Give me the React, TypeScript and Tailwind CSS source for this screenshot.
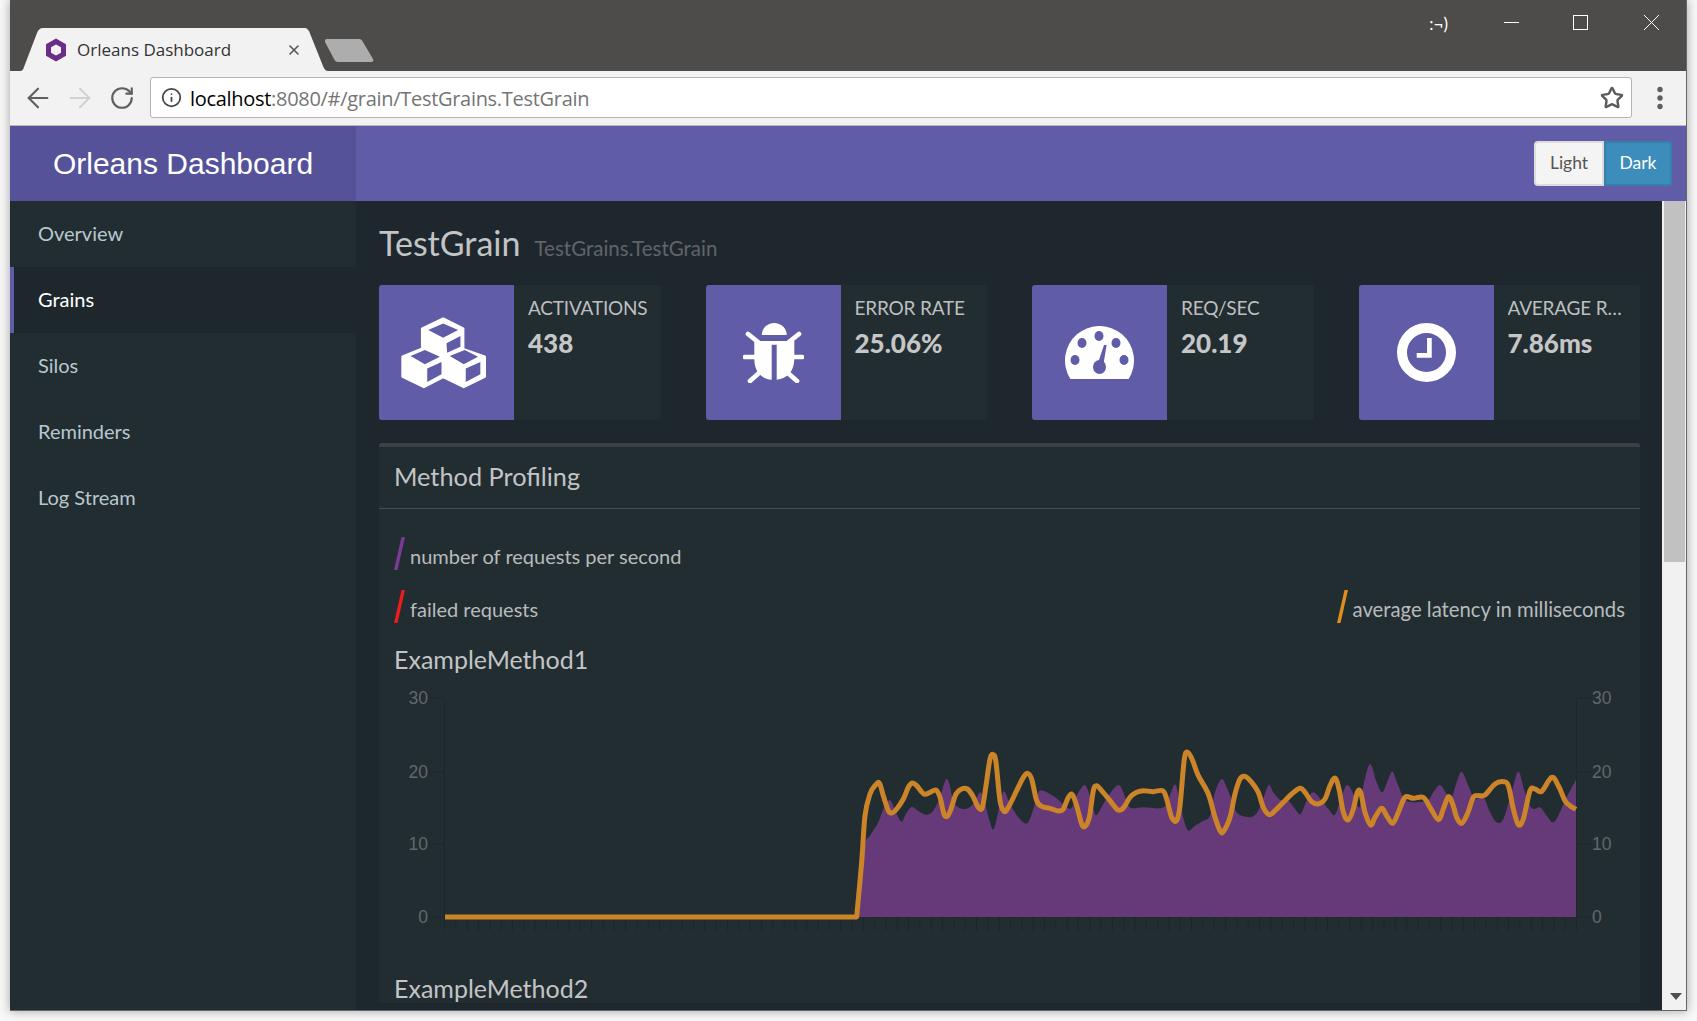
import { ArrowLeft, ArrowRight, Info, RotateCw, Star, X } from "lucide-react";

/* chart points, read off the screenshot: [x, y] in page pixels x3, from x=850 / y=730 */
const linePts: number[][] = [
  [20, 563], [35, 400], [45, 260], [60, 195], [75, 170], [88, 162], [100, 200], [115, 245], [125, 252], [140, 240],
  [160, 210], [175, 175], [187, 162], [200, 170], [222, 195], [240, 190], [258, 183], [270, 205], [282, 255], [292, 262],
  [303, 240], [318, 195], [335, 180], [352, 180], [368, 200], [385, 235], [397, 235], [408, 170], [420, 90], [430, 77],
  [438, 100], [450, 215], [462, 247], [475, 235], [500, 185], [520, 145], [533, 133], [545, 150], [560, 215], [575, 232],
  [600, 238], [625, 246], [640, 240], [655, 205], [667, 197], [680, 230], [695, 285], [705, 292], [718, 265], [730, 185],
  [740, 170], [755, 185], [780, 215], [800, 240], [812, 243], [825, 230], [840, 205], [860, 190], [880, 185], [910, 188],
  [938, 185], [950, 210], [965, 265], [980, 275], [990, 230], [1003, 90], [1014, 70], [1028, 95], [1045, 140], [1075, 195],
  [1095, 265], [1110, 305], [1120, 308], [1140, 265], [1155, 195], [1170, 150], [1185, 142], [1205, 160], [1225, 190], [1240, 235],
  [1258, 257], [1275, 245], [1300, 220], [1325, 195], [1350, 178], [1365, 190], [1385, 218], [1405, 225], [1425, 210], [1440, 170],
  [1455, 147], [1467, 180], [1480, 250], [1495, 273], [1510, 240], [1522, 190], [1532, 190], [1545, 250], [1562, 288], [1575, 265],
  [1595, 238], [1610, 260], [1628, 283], [1645, 250], [1665, 205], [1690, 208], [1720, 205], [1740, 235], [1765, 272], [1780, 240],
  [1795, 203], [1808, 225], [1820, 265], [1835, 283], [1852, 255], [1870, 205], [1885, 200], [1905, 198], [1935, 165], [1960, 158],
  [1975, 170], [1990, 240], [2005, 287], [2020, 270], [2040, 185], [2055, 180], [2075, 187], [2105, 145], [2125, 170], [2145, 215],
  [2160, 230], [2178, 241],
];

const areaPts: number[][] = [
  [20, 563], [30, 460], [45, 345], [60, 320], [85, 280], [100, 240], [115, 215], [125, 220], [140, 255], [155, 278],
  [165, 260], [180, 238], [190, 235], [210, 250], [230, 257], [250, 245], [270, 205], [282, 165], [290, 150], [298, 165],
  [310, 215], [325, 235], [345, 240], [365, 230], [380, 205], [392, 190], [405, 225], [420, 280], [430, 302], [440, 270],
  [455, 200], [465, 190], [480, 225], [500, 258], [520, 280], [535, 280], [550, 240], [565, 190], [580, 185], [600, 195],
  [625, 212], [650, 235], [665, 237], [680, 200], [692, 180], [704, 168], [716, 190], [730, 240], [740, 258], [760, 225],
  [790, 180], [807, 168], [820, 190], [835, 230], [850, 238], [880, 235], [930, 238], [950, 225], [965, 185], [977, 168],
  [990, 220], [1005, 285], [1017, 305], [1035, 290], [1060, 275], [1080, 260], [1095, 190], [1115, 150], [1130, 175], [1150, 225],
  [1160, 250], [1180, 262], [1210, 262], [1230, 235], [1255, 170], [1270, 190], [1290, 212], [1315, 215], [1335, 240], [1352, 255],
  [1370, 215], [1390, 190], [1415, 215], [1435, 240], [1455, 257], [1475, 200], [1492, 168], [1510, 195], [1528, 235], [1540, 170],
  [1560, 105], [1580, 160], [1597, 190], [1615, 150], [1628, 128], [1645, 170], [1670, 215], [1730, 215], [1750, 190], [1770, 168],
  [1790, 195], [1805, 205], [1820, 160], [1835, 128], [1855, 170], [1875, 210], [1900, 205], [1920, 250], [1940, 280], [1960, 270],
  [1985, 190], [2005, 128], [2025, 190], [2045, 238], [2070, 235], [2090, 260], [2108, 280], [2125, 260], [2150, 205], [2178, 152],
];

function smooth(pts: number[][]) {
  const p = pts.map(([x, y]) => [850 + x / 3, 730 + y / 3]);
  let d = `${p[0][0]} ${p[0][1]}`;
  for (let i = 0; i < p.length - 1; i++) {
    const a = p[Math.max(i - 1, 0)];
    const b = p[i];
    const c = p[i + 1];
    const e = p[Math.min(i + 2, p.length - 1)];
    d += ` C${b[0] + (c[0] - a[0]) / 6} ${b[1] + (c[1] - a[1]) / 6} ${c[0] - (e[0] - b[0]) / 6} ${c[1] - (e[1] - b[1]) / 6} ${c[0]} ${c[1]}`;
  }
  return d;
}

function Chart() {
  const ticks = Array.from({ length: 101 }, (_, i) => 444.5 + i * 11.32);
  const axisY = [
    { v: "30", y: 699 },
    { v: "20", y: 773 },
    { v: "10", y: 845 },
    { v: "0", y: 918 },
  ];
  return (
    <svg viewBox="394 682 1231 258" className="block h-[258px] w-[1231px]">
      <path d="M444.5 699V932M1576.5 699V932" stroke="#1c262b" fill="none" />
      {ticks.map((x) => (
        <line key={x} x1={x} x2={x} y1={918} y2={932} stroke="#1c262b" />
      ))}
      {axisY.map((t) => (
        <g key={t.v} fontFamily="Liberation Sans, sans-serif" fontSize="17.5" fill="#62676a">
          <line x1={429} x2={444} y1={t.y} y2={t.y} stroke="#1c262b" />
          <line x1={1577} x2={1592} y1={t.y} y2={t.y} stroke="#1c262b" />
          <text x={428} y={t.y + 6} textAnchor="end">{t.v}</text>
          <text x={1592} y={t.y + 6}>{t.v}</text>
        </g>
      ))}
      <path d={`M${smooth(areaPts)} L1576 918 L856 918Z`} fill="#663979" />
      <path
        d={`M445 918 L856 918 L${smooth(linePts)}`}
        fill="none"
        stroke="#cb8528"
        strokeWidth="5"
        strokeLinejoin="round"
      />
    </svg>
  );
}

function CubesIcon() {
  return (
    <svg viewBox="30 30 262 222" className="mr-[6px] h-[74px] w-[87px]">
      <path
        d="M160 38L220 68V130L285 152V212L222 243L160 213L102 243L38 212V152L97 128V68Z"
        fill="#fff"
        stroke="#fff"
        strokeWidth="8"
        strokeLinejoin="round"
      />
      <path
        d="M115 72L160 52L205 72L160 95ZM170 112L212 90V122L172 140ZM62 150L105 132L150 152L105 175ZM112 188L155 168V205L112 228ZM180 150L225 132L265 152L222 175ZM228 188L272 168V205L228 228Z"
        fill="#605ca8"
      />
    </svg>
  );
}

function BugIcon() {
  return (
    <svg viewBox="0 0 61 60" className="h-[60px] w-[61px]" fill="#fff">
      <path d="M18.7 12a12.5 12 0 0 1 25 0z" />
      <path d="M11.3 18H51.3V36C51.3 48 44 56 33.7 56.7V21.7H28.7V56.7C18 56 11.3 48 11.3 36Z" />
      <path
        d="M5 11l10 8M56 11l-10 8M2 34h10M59 34H49M7 58l9-8M54 58l-9-8"
        stroke="#fff"
        strokeWidth="4.7"
        strokeLinecap="round"
      />
    </svg>
  );
}

function GaugeIcon() {
  return (
    <svg viewBox="0 0 69 53" className="h-[53px] w-[69px]">
      <path d="M5.4 53a34.5 34.5 0 1 1 58.2 0z" fill="#fff" />
      <g fill="#605ca8">
        <ellipse cx="34" cy="10" rx="4.5" ry="5" />
        <ellipse cx="17" cy="17" rx="4.5" ry="5" />
        <ellipse cx="51" cy="17" rx="4.5" ry="5" />
        <ellipse cx="10" cy="34" rx="4.5" ry="5" />
        <ellipse cx="59" cy="34" rx="4.5" ry="5" />
        <ellipse cx="34.5" cy="41" rx="6.5" ry="7" />
        <path d="M32 40l7-21h2.6l-3.6 22z" />
      </g>
    </svg>
  );
}

function ClockIcon() {
  return (
    <svg viewBox="0 0 59 59" className="h-[59px] w-[59px]" fill="none">
      <circle cx="29.5" cy="29.5" r="24.5" stroke="#fff" strokeWidth="10" />
      <path d="M32.4 15V32.3H19.7" stroke="#fff" strokeWidth="4.7" />
    </svg>
  );
}

function StatCard({ icon, label, value }: { icon: React.ReactNode; label: string; value: string }) {
  return (
    <div className="flex h-[135px] overflow-hidden rounded-[3px] bg-[#222d32]">
      <div className="flex w-[135px] shrink-0 items-center justify-center bg-[#605ca8]">{icon}</div>
      <div className="min-w-0 flex-1 pl-[14px] pr-[10px] pt-[9px]">
        <div className="truncate text-[19px] leading-[28px] tracking-[-0.2px] text-[#bdbfbf]">{label}</div>
        <div className="mt-[6px] text-[26px] font-black leading-[30px] text-[#c6c6c6]">{value}</div>
      </div>
    </div>
  );
}

function Slash({ color }: { color: string }) {
  return (
    <svg viewBox="0 0 11 33" className="h-[33px] w-[11px] shrink-0">
      <path d="M7.5 0H11L3.5 33H0z" fill={color} />
    </svg>
  );
}

const navItems = ["Overview", "Grains", "Silos", "Reminders", "Log Stream"];

export default function App() {
  return (
    <div className="h-[1021px] w-[1697px] overflow-hidden bg-[#f8f8f8] font-['Lato',sans-serif]">
      <div className="ml-[10px] flex h-[1011px] w-[1677px] flex-col border-r border-b border-[#666] shadow-[0_0_10px_rgba(0,0,0,0.35)]">
        {/* title bar */}
        <div className="flex h-[71px] shrink-0 items-start bg-[#4d4c4a]">
          <div className="relative ml-[10px] mt-[28px] flex h-[43px] w-[308px] items-center">
            <svg viewBox="0 0 308 43" className="absolute inset-0 h-full w-full">
              <path d="M0 43C2 43 3 42 4 39L17 5C18 2 20 0 23 0H285C287 0 288 2 289 3L303 38C304 41 306 43 308 43Z" fill="#f2f2f2" />
            </svg>
            <svg viewBox="0 0 22 24" className="relative ml-[25px] h-[24px] w-[22px]">
              <path d="M11 3.5L18.5 7.8V16.2L11 20.5L3.5 16.2V7.8Z" fill="#f2f2f2" stroke="#6b2d87" strokeWidth="5" />
            </svg>
            <span className="relative ml-[10px] font-['Open_Sans',sans-serif] text-[17px] text-[#333]">Orleans Dashboard</span>
            <X size={16} strokeWidth={2.4} className="absolute left-[266px] top-[14px] text-[#555]" />
          </div>
          <svg viewBox="0 0 49 23" className="ml-[-3px] mt-[39px] h-[23px] w-[49px]">
            <path d="M2 0H34C36 0 37 1 38 3L48 20C49 22 48 23 46 23H13C11 23 10 22 9 20L0 3C0 1 0 0 2 0Z" fill="#adadad" />
          </svg>
          <div className="ml-auto flex items-start text-white">
            <span className="mt-[12px] text-[17px] leading-[24px]">:¬)</span>
            <svg viewBox="0 0 15 15" className="ml-[56px] mt-[15px] h-[15px] w-[15px]" stroke="#fff" fill="none">
              <path d="M0 7.5H15" />
            </svg>
            <svg viewBox="0 0 15 15" className="ml-[54px] mt-[15px] h-[15px] w-[15px]" stroke="#fff" fill="none">
              <rect x="0.5" y="0.5" width="14" height="14" />
            </svg>
            <svg viewBox="0 0 15 15" className="ml-[56px] mr-[27px] mt-[15px] h-[15px] w-[15px]" stroke="#fff" fill="none">
              <path d="M0 0L15 15M15 0L0 15" />
            </svg>
          </div>
        </div>

        {/* toolbar */}
        <div className="flex h-[55px] shrink-0 items-center border-b border-[#b8b8b8] bg-[#f2f2f2] pb-[1px]">
          <ArrowLeft size={32} strokeWidth={1.6} className="ml-[12px] text-[#5f5f5f]" />
          <ArrowRight size={32} strokeWidth={1.6} className="ml-[10px] text-[#d2d2d2]" />
          <RotateCw size={26} strokeWidth={2} className="ml-[13px] text-[#5f5f5f]" />
          <div className="ml-[15px] flex h-[41px] w-[1482px] items-center rounded-[3px] border border-[#b4b4b4] bg-white pl-[10px] pr-[7px] font-['Open_Sans',sans-serif]">
            <Info size={21} strokeWidth={2} className="text-[#444]" />
            <span className="ml-[8px] pt-[2px] text-[20px] tracking-[-0.3px] text-black">
              localhost<span className="text-[#757575]">:8080/#/grain/TestGrains.TestGrain</span>
            </span>
            <Star size={24} strokeWidth={2.4} className="ml-auto text-[#5a5a5a]" />
          </div>
          <svg viewBox="0 0 6 24" className="ml-[25px] h-[24px] w-[6px]" fill="#5f5f5f">
            <circle cx="3" cy="3.5" r="2.7" />
            <circle cx="3" cy="12" r="2.7" />
            <circle cx="3" cy="20.5" r="2.7" />
          </svg>
        </div>

        {/* app header */}
        <div className="flex h-[75px] shrink-0 items-center bg-[#605ca8]">
          <div className="flex h-full w-[346px] items-center justify-center bg-[#555299] font-['Liberation_Sans',sans-serif] text-[30px] text-white">
            Orleans Dashboard
          </div>
          <div className="ml-auto mr-[14px] flex h-[45px] text-[17.5px]">
            <button className="w-[70px] rounded-l-[4px] border-2 border-[#ddd] bg-[#f4f4f4] text-[#555]">Light</button>
            <button className="w-[68px] rounded-r-[4px] border-2 border-[#367fa9] bg-[#3c8dbc] text-white">Dark</button>
          </div>
        </div>

        <div className="flex min-h-0 flex-1">
          {/* sidebar */}
          <nav className="w-[346px] shrink-0 bg-[#222d32] text-[20px]">
            {navItems.map((item) => (
              <div
                key={item}
                className={
                  item === "Grains"
                    ? "flex h-[66px] items-center border-l-[4px] border-[#605ca8] bg-[#1e282c] pb-[2px] pl-[24px] text-white"
                    : "flex h-[66px] items-center pb-[2px] pl-[28px] text-[#b8c7ce]"
                }
              >
                {item}
              </div>
            ))}
          </nav>

          {/* content */}
          <main className="w-[1306px] shrink-0 overflow-hidden bg-[#1f272e] pl-[23px] pr-[22px]">
            <div className="flex h-[84px] items-baseline pt-[17px] text-[#c2c4c5]">
              <h1 className="text-[34px] leading-[50px]">TestGrain</h1>
              <span className="ml-[14px] text-[20.5px] text-[#5f6568]">TestGrains.TestGrain</span>
            </div>

            <div className="grid grid-cols-4 gap-x-[45px]">
              <StatCard icon={<CubesIcon />} label="ACTIVATIONS" value="438" />
              <StatCard icon={<BugIcon />} label="ERROR RATE" value="25.06%" />
              <StatCard icon={<GaugeIcon />} label="REQ/SEC" value="20.19" />
              <StatCard icon={<ClockIcon />} label="AVERAGE RESPONSE TIME" value="7.86ms" />
            </div>

            <section className="mt-[23px] rounded-t-[3px] border-t-[4px] border-[#3b4145] bg-[#222d32] text-[#b8bbbc]">
              <div className="flex h-[62px] items-center border-b border-[#454d52] px-[15px] pb-[2px]">
                <h3 className="text-[25.3px] text-[#c2c4c5]">Method Profiling</h3>
              </div>
              <div className="px-[15px] pt-[28px]">
                <div className="flex h-[33px] text-[20px]">
                  <Slash color="#7b3a96" />
                  <span className="ml-[5px] pt-[2px] leading-[34px]">number of requests per second</span>
                </div>
                <div className="mt-[20px] flex h-[33px] text-[20px]">
                  <Slash color="#ec1c1c" />
                  <span className="ml-[5px] pt-[2px] leading-[34px]">failed requests</span>
                  <div className="ml-auto flex">
                    <Slash color="#e08e1b" />
                    <span className="ml-[5px] pt-[2px] text-[20.3px] leading-[34px]">average latency in milliseconds</span>
                  </div>
                </div>
                <h4 className="mt-[21px] text-[25px] leading-[30px] text-[#c2c4c5]">ExampleMethod1</h4>
                <div className="mt-[7px]">
                  <Chart />
                </div>
                <h4 className="mt-[34px] text-[25px] leading-[30px] text-[#c2c4c5]">ExampleMethod2</h4>
              </div>
            </section>
          </main>

          {/* scrollbar */}
          <div className="flex w-[24px] shrink-0 flex-col bg-[#f1f1f1] pl-[2px] pr-[1px]">
            <div className="h-[361px] bg-[#c1c1c1]" />
            <svg viewBox="0 0 12 7" className="ml-[6px] mt-auto mb-[10px] h-[7px] w-[12px]">
              <path d="M0 0H12L6 7Z" fill="#505050" />
            </svg>
          </div>
        </div>
      </div>
    </div>
  );
}
